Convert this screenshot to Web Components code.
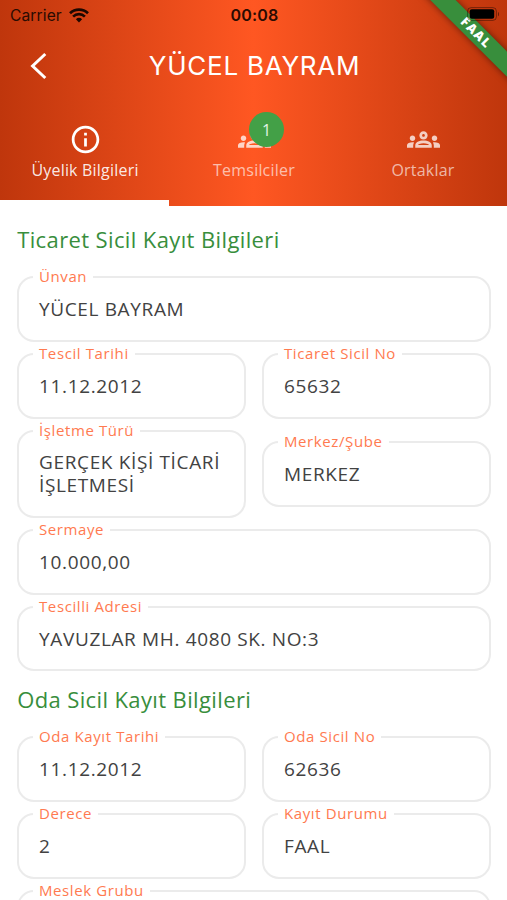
<!DOCTYPE html>
<html lang="tr">
<head>
<meta charset="utf-8">
<title>Üyelik Bilgileri</title>
<style>
html,body{margin:0;height:900px;overflow:hidden;background:#fff;font-family:"Open Sans","Noto Sans",sans-serif}
</style>
</head>
<body>
<member-page></member-page>
<script>
const define = (name, html, setup) => customElements.define(name, class extends HTMLElement {
  constructor() {
    super();
    const t = document.createElement('template');
    t.innerHTML = html;
    this.attachShadow({mode: 'open'}).appendChild(t.content.cloneNode(true));
  }
  connectedCallback() { if (setup) setup(this, this.shadowRoot); }
});

define('status-bar', `
<style>
:host{display:grid;grid-template-columns:1fr auto 1fr;align-items:center;height:30px;padding:0 8px 0 10px;box-sizing:border-box;font-family:Inter,Roboto,sans-serif;color:#2a0b02;position:relative;z-index:3}
.left{display:flex;align-items:center;gap:7px;font-size:15.6px;letter-spacing:.1px}
.time{font-size:16px;font-weight:600;letter-spacing:.2px}
.right{display:flex;justify-content:flex-end;margin-top:-2px}
svg{display:block}
</style>
<div class="left"><span>Carrier</span>
<svg width="20" height="15" viewBox="0 0 20 15" fill="none" stroke="#1c0701" stroke-width="2.7"><path d="M1 5.2a13 13 0 0 1 18 0"/><path d="M4.1 8.6a8.5 8.5 0 0 1 11.8 0"/><path d="M10 14.5l-3.1-3.2a4.5 4.5 0 0 1 6.2 0z" fill="#1c0701" stroke="none"/></svg></div>
<span class="time">00:08</span>
<div class="right"><svg width="32" height="14" viewBox="0 0 32 14"><rect x=".6" y=".6" width="28.8" height="12.8" rx="3.6" fill="none" stroke="#000" stroke-opacity=".4"/><rect x="2.8" y="2.2" width="24.4" height="9.6" rx="2" fill="#000"/><path d="M31 5v4.2c1.4-.5 1.4-3.7 0-4.2z" fill="#000" fill-opacity=".45"/></svg></div>`);

define('corner-ribbon', `
<style>
:host{position:absolute;z-index:2;right:0;top:0;width:100px;height:100px;overflow:hidden}
div{position:absolute;left:-6.5px;top:23.5px;width:150px;height:17.5px;transform:rotate(45deg);background:#388e3c;box-shadow:0 0 7px rgba(0,0,0,.5);color:#fff;font-weight:800;font-size:12.8px;line-height:17.5px;letter-spacing:1.1px;text-align:center}
</style><div><slot></slot></div>`);

define('top-bar', `
<style>
:host{display:grid;grid-template-columns:74px 1fr 72px;align-items:center;height:72px;color:#fff}
svg{display:block;margin-left:29px}
h1{margin:0;text-align:center;font:400 26px/34px Inter,Roboto,sans-serif;letter-spacing:.75px;white-space:nowrap}
</style>
<svg width="19" height="28" viewBox="0 0 19 28" fill="none" stroke="#fff" stroke-width="3"><path d="M16.3 2L3.6 14l12.7 12"/></svg>
<h1><slot></slot></h1>`);

const INFO = 'M11 7h2v2h-2zm0 4h2v6h-2zm1-9C6.48 2 2 6.48 2 12s4.48 10 10 10 10-4.48 10-10S17.52 2 12 2zm0 18c-4.41 0-8-3.59-8-8s3.59-8 8-8 8 3.59 8 8-3.59 8-8 8z';
const GROUPS = 'M4 13c1.1 0 2-.9 2-2s-.9-2-2-2-2 .9-2 2 .9 2 2 2zm1.13 1.1c-.37-.06-.74-.1-1.13-.1-.99 0-1.93.21-2.78.58C.48 14.9 0 15.62 0 16.43V18h4.5v-1.61c0-.83.23-1.61.63-2.29zM20 13c1.1 0 2-.9 2-2s-.9-2-2-2-2 .9-2 2 .9 2 2 2zm4 3.43c0-.81-.48-1.53-1.22-1.85-.85-.37-1.79-.58-2.78-.58-.39 0-.76.04-1.13.1.4.68.63 1.46.63 2.29V18H24v-1.57zm-7.76-2.78c-1.17-.52-2.61-.9-4.24-.9-1.63 0-3.07.39-4.24.9C6.68 14.13 6 15.21 6 16.39V18h12v-1.61c0-1.18-.68-2.26-1.76-2.74zM8.07 16c.09-.23.13-.39.91-.69.97-.38 1.99-.56 3.02-.56s2.05.18 3.02.56c.77.3.81.46.91.69H8.07zM12 8c.55 0 1 .45 1 1s-.45 1-1 1-1-.45-1-1 .45-1 1-1m0-2c-1.66 0-3 1.34-3 3s1.34 3 3 3 3-1.34 3-3-1.34-3-3-3z';

define('tab-item', `
<style>
:host{flex:1;display:flex;flex-direction:column;align-items:center;position:relative;height:104px;box-sizing:border-box;padding-top:20.5px;color:rgba(255,255,255,.64)}
:host([active]){color:rgba(255,255,255,.9);border-bottom:6px solid #fff}
svg{display:block;width:33px;height:33px;fill:currentColor;flex:none}
.icon{position:relative;margin-left:1px;color:rgba(255,255,255,.75)}
:host([active]) .icon{color:#fff}
.label{font-size:16px;line-height:22px;margin-top:3px;padding-left:1px;letter-spacing:.2px;white-space:nowrap}
b{position:absolute;left:11.5px;top:-10.5px;width:35px;height:35px;border-radius:50%;background:#43a047;color:#e4f4e5;font-weight:400;font-size:16px;line-height:36px;text-align:center}
b:empty{display:none}
</style>
<div class="icon"><svg viewBox="0 0 24 24"><path/></svg><b></b></div>
<span class="label"><slot></slot></span>`, (el, r) => {
  r.querySelector('path').setAttribute('d', el.getAttribute('icon') === 'info' ? INFO : GROUPS);
  r.querySelector('b').textContent = el.getAttribute('badge') || '';
});

define('app-header', `
<style>
:host{display:block;position:relative;height:206px;overflow:hidden;background:linear-gradient(90deg,#bf360c,#ff5722 50%,#bf360c)}
.tabs{display:flex}
</style>
<status-bar></status-bar>
<top-bar>YÜCEL BAYRAM</top-bar>
<div class="tabs">
<tab-item icon="info" active>Üyelik Bilgileri</tab-item>
<tab-item icon="groups" badge="1">Temsilciler</tab-item>
<tab-item icon="groups">Ortaklar</tab-item>
</div>
<corner-ribbon>FAAL</corner-ribbon>`);

define('section-title', `
<style>
:host{display:block;height:28px;padding-left:.7px;font-size:22px;line-height:27px;letter-spacing:.38px;color:#388e3c;white-space:nowrap}
</style><slot></slot>`);

define('info-field', `
<style>
:host{display:block;flex:1 1 0;min-width:0;position:relative;box-sizing:border-box;min-height:65.6px;border:2px solid #ebebeb;border-radius:17px;padding:19.7px 10px 19.3px 20.5px;background:#fff;color:#424242;font-size:19px;line-height:22.6px;letter-spacing:.64px}
label{position:absolute;left:14.5px;top:-12px;padding:0 6px;background:#fff;color:#ff7a50;font-size:15px;line-height:20px;letter-spacing:.6px;white-space:nowrap}
</style><label></label><slot></slot>`, (el, r) => { r.querySelector('label').textContent = el.getAttribute('label'); });

define('field-row', `
<style>
:host{display:flex;align-items:center;gap:16px}
</style><slot></slot>`);

define('member-page', `
<style>
:host{display:block;height:900px;overflow:hidden}
main{display:flex;flex-direction:column;gap:11.2px;padding:19.5px 16.5px 0 16.5px}
section-title{margin-bottom:11.5px}
.second{margin-top:3px}
</style>
<app-header></app-header>
<main>
<section-title>Ticaret Sicil Kayıt Bilgileri</section-title>
<field-row><info-field label="Ünvan">YÜCEL BAYRAM</info-field></field-row>
<field-row><info-field label="Tescil Tarihi">11.12.2012</info-field><info-field label="Ticaret Sicil No">65632</info-field></field-row>
<field-row><info-field label="İşletme Türü">GERÇEK KİŞİ TİCARİ İŞLETMESİ</info-field><info-field label="Merkez/Şube">MERKEZ</info-field></field-row>
<field-row><info-field label="Sermaye">10.000,00</info-field></field-row>
<field-row><info-field label="Tescilli Adresi">YAVUZLAR MH. 4080 SK. NO:3</info-field></field-row>
<section-title class="second">Oda Sicil Kayıt Bilgileri</section-title>
<field-row><info-field label="Oda Kayıt Tarihi">11.12.2012</info-field><info-field label="Oda Sicil No">62636</info-field></field-row>
<field-row><info-field label="Derece">2</info-field><info-field label="Kayıt Durumu">FAAL</info-field></field-row>
<field-row><info-field label="Meslek Grubu"></info-field></field-row>
</main>`);
</script>
</body>
</html>
